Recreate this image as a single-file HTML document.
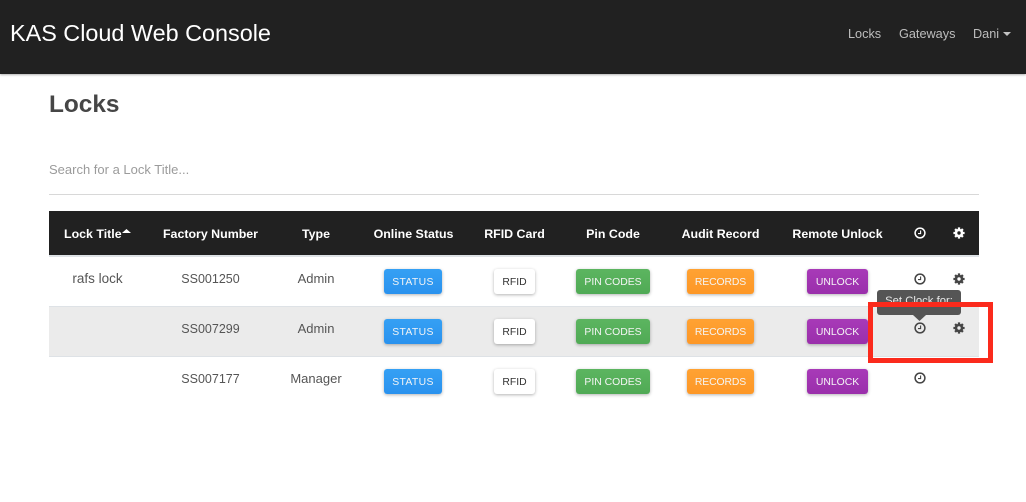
<!DOCTYPE html>
<html><head><meta charset="utf-8">
<style>
html,body{margin:0;padding:0;background:#fff;width:1026px;height:502px;overflow:hidden}
body{position:relative;font-family:"Liberation Sans",sans-serif;color:#4a4a4a}
.a{position:absolute;white-space:nowrap}
.c{position:absolute;white-space:nowrap;transform:translateX(-50%);text-align:center}
.th{color:#fff;font-weight:bold;font-size:12.4px;line-height:16px;top:226px}
.td{font-size:13px;line-height:16px;color:#555}
.nav{top:26px;font-size:12.7px;line-height:16px;color:#bdbdbd}
.btn{position:absolute;height:25px;line-height:27px;text-align:center;font-size:10.4px;color:#f4f4f4;border-radius:3px;box-shadow:0 1px 3px rgba(0,0,0,.3)}
.s{left:384px;width:58px;background:linear-gradient(#35a0f4,#2a92ee);letter-spacing:.35px}
.r{left:494px;width:41px;background:#fff;color:#333}
.p{left:576px;width:74px;background:linear-gradient(#5cb560,#50aa55)}
.e{left:687px;width:67px;background:linear-gradient(#ffa233,#fd9726);letter-spacing:-.1px}
.u{left:807px;width:61px;background:linear-gradient(#a83ab8,#9a2fab)}
svg{position:absolute}
.ck{left:913.5px}
.gr{left:953px}
</style></head><body>
<div class="a" style="left:0;top:0;width:1026px;height:74px;background:#212121;box-shadow:0 1px 2px rgba(0,0,0,.3)"></div>
<div class="a" style="left:10px;top:18px;font-size:23.4px;line-height:30px;color:#fff">KAS Cloud Web Console</div>
<div class="a nav" style="left:848px">Locks</div>
<div class="a nav" style="left:899px">Gateways</div>
<div class="a nav" style="left:973px">Dani</div>
<svg style="left:1002.500px;top:31.500px" width="8" height="4"><path d="M0 0H8L4 4Z" fill="#c4c4c4"/></svg>

<div class="a" style="left:49px;top:89px;font-size:24.4px;line-height:32px;font-weight:bold;color:#464646">Locks</div>
<div class="a" style="left:49px;top:162px;font-size:13px;line-height:16px;color:#9b9b9b">Search for a Lock Title...</div>
<div class="a" style="left:49px;top:194px;width:930px;height:1px;background:#d8d8d8"></div>

<div class="a" style="left:49px;top:211px;width:930px;height:44px;background:#212121"></div>
<div class="a" style="left:49px;top:255px;width:930px;height:2px;background:#dee2e6"></div>
<div class="a" style="left:49px;top:306px;width:930px;height:50px;background:#ebebeb"></div>
<div class="a" style="left:49px;top:306px;width:930px;height:1px;background:#dee2e6"></div>
<div class="a" style="left:49px;top:356px;width:930px;height:1px;background:#dee2e6"></div>

<div class="a th" style="left:64px">Lock Title</div>
<svg style="left:122px;top:229px" width="9" height="4"><path d="M0 4L4.500 0L9 4Z" fill="#fff"/></svg>
<div class="c th" style="left:210.500px">Factory Number</div>
<div class="c th" style="left:316px">Type</div>
<div class="c th" style="left:413.500px">Online Status</div>
<div class="c th" style="left:514.500px">RFID Card</div>
<div class="c th" style="left:613px">Pin Code</div>
<div class="c th" style="left:720.500px">Audit Record</div>
<div class="c th" style="left:837.500px">Remote Unlock</div>

<svg class="ck" style="top:227.300px" width="12" height="12" viewBox="0 0 12 12"><circle cx="6" cy="6" r="4.900" fill="none" stroke="#fff" stroke-width="1.500"/><path d="M6.600 3.500V6.600H4" fill="none" stroke="#fff" stroke-width="1.100"/></svg>
<svg class="gr" style="top:227.300px" width="12" height="12" viewBox="0 0 12 12"><circle cx="6" cy="6" r="4.300" fill="#fff"/><path d="M6 .4V11.600M.4 6H11.600M2.100 2.100L9.900 9.900M9.900 2.100L2.100 9.900" stroke="#fff" stroke-width="2.300"/><circle cx="6" cy="6" r="1.700" fill="#212121"/></svg>

<div class="c td" style="left:97.500px;top:271px;font-size:13.500px">rafs lock</div>
<div class="c td" style="left:210.500px;top:271px;font-size:12.500px">SS001250</div>
<div class="c td" style="left:316px;top:271px">Admin</div>
<div class="c td" style="left:210.500px;top:321px;font-size:12.500px">SS007299</div>
<div class="c td" style="left:316px;top:321px">Admin</div>
<div class="c td" style="left:210.500px;top:371px;font-size:12.500px">SS007177</div>
<div class="c td" style="left:316px;top:371px">Manager</div>

<div class="btn s" style="top:269px">STATUS</div><div class="btn r" style="top:269px">RFID</div><div class="btn p" style="top:269px">PIN CODES</div><div class="btn e" style="top:269px">RECORDS</div><div class="btn u" style="top:269px">UNLOCK</div>
<div class="btn s" style="top:319px">STATUS</div><div class="btn r" style="top:319px">RFID</div><div class="btn p" style="top:319px">PIN CODES</div><div class="btn e" style="top:319px">RECORDS</div><div class="btn u" style="top:319px">UNLOCK</div>
<div class="btn s" style="top:369px">STATUS</div><div class="btn r" style="top:369px">RFID</div><div class="btn p" style="top:369px">PIN CODES</div><div class="btn e" style="top:369px">RECORDS</div><div class="btn u" style="top:369px">UNLOCK</div>

<svg class="ck" style="top:272.700px" width="12" height="12" viewBox="0 0 12 12"><circle cx="6" cy="6" r="4.900" fill="none" stroke="#444" stroke-width="1.500"/><path d="M6.600 3.500V6.600H4" fill="none" stroke="#444" stroke-width="1.100"/></svg>
<svg class="ck" style="top:322.300px" width="12" height="12" viewBox="0 0 12 12"><circle cx="6" cy="6" r="4.900" fill="none" stroke="#444" stroke-width="1.500"/><path d="M6.600 3.500V6.600H4" fill="none" stroke="#444" stroke-width="1.100"/></svg>
<svg class="ck" style="top:372.300px" width="12" height="12" viewBox="0 0 12 12"><circle cx="6" cy="6" r="4.900" fill="none" stroke="#444" stroke-width="1.500"/><path d="M6.600 3.500V6.600H4" fill="none" stroke="#444" stroke-width="1.100"/></svg>
<svg class="gr" style="top:272.700px" width="12" height="12" viewBox="0 0 12 12"><circle cx="6" cy="6" r="4.300" fill="#444"/><path d="M6 .4V11.600M.4 6H11.600M2.100 2.100L9.900 9.900M9.900 2.100L2.100 9.900" stroke="#444" stroke-width="2.300"/><circle cx="6" cy="6" r="1.700" fill="#fff"/></svg>
<svg class="gr" style="top:322.300px" width="12" height="12" viewBox="0 0 12 12"><circle cx="6" cy="6" r="4.300" fill="#444"/><path d="M6 .4V11.600M.4 6H11.600M2.100 2.100L9.900 9.900M9.900 2.100L2.100 9.900" stroke="#444" stroke-width="2.300"/><circle cx="6" cy="6" r="1.700" fill="#ebebeb"/></svg>

<div class="a" style="left:877px;top:290px;width:84px;height:25px;background:#555;border-radius:3px"></div>
<svg style="left:913px;top:315px" width="13" height="6"><path d="M0 0H13L6.500 6Z" fill="#555"/></svg>
<div class="a" style="left:877px;top:295px;width:84px;height:8px;overflow:hidden;text-align:center;color:#e8e8e8;font-size:11.300px;line-height:13px">Set Clock for:</div>

<div class="a" style="left:868px;top:302px;width:115px;height:51px;border:5px solid #fb2a1c"></div>
</body></html>
